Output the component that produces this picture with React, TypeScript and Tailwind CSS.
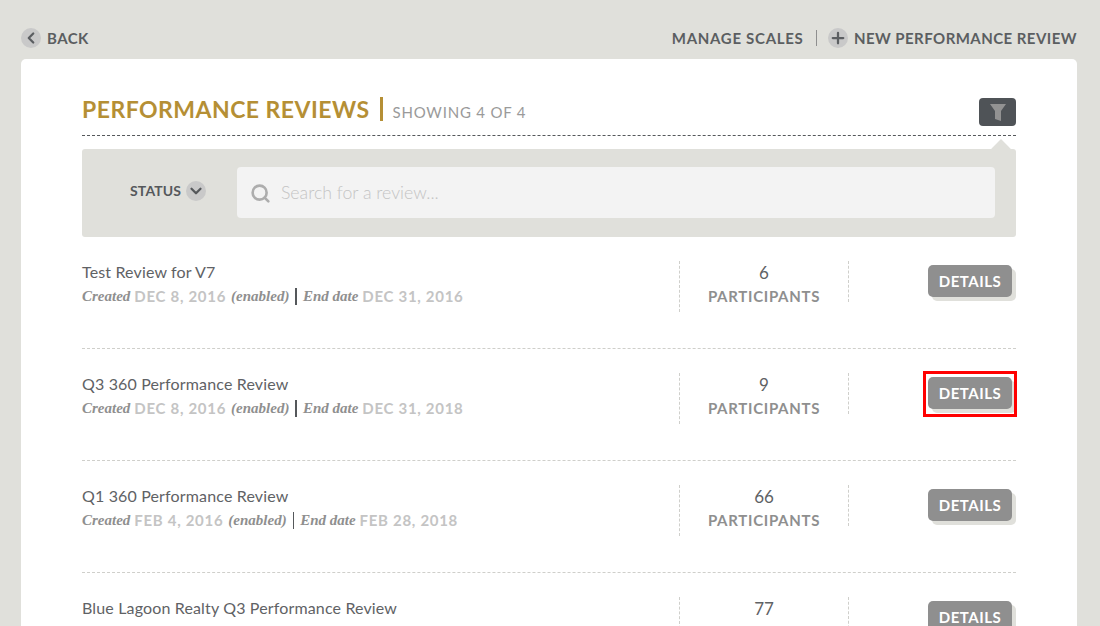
import { ChevronDown, ChevronLeft, Plus, Search } from "lucide-react";

type Review = { name: string; created?: string; end?: string; count: number; marked?: boolean };

const reviews: Review[] = [
    { name: "Test Review for V7", created: "DEC 8, 2016", end: "DEC 31, 2016", count: 6 },
    { name: "Q3 360 Performance Review", created: "DEC 8, 2016", end: "DEC 31, 2018", count: 9, marked: true },
    { name: "Q1 360 Performance Review", created: "FEB 4, 2016", end: "FEB 28, 2018", count: 66 },
    // the dates of this row are below the fold
    { name: "Blue Lagoon Realty Q3 Performance Review", count: 77 },
];

const serif = "font-['Liberation_Serif',serif] italic font-bold text-[15px] text-[#8f8f8f]";
const date = "text-[15px] font-bold tracking-[0.7px] text-[#c4c4c4]";

function ReviewRow({ review }: { review: Review }) {
    return (
        <div className="flex border-b border-dashed border-[#cfcfcb] pt-6 pb-9">
            <div className="-mt-[1px] w-[597px]">
                <p className="text-[16px] leading-6 tracking-[0.15px] text-[#5f6265]">{review.name}</p>
                {review.created && (
                    <p className="flex items-center whitespace-nowrap leading-6">
                        <span className={serif}>Created</span>
                        <span className={`${date} ml-[4px]`}>{review.created}</span>
                        <span className={`${serif} ml-[5px]`}>(enabled)</span>
                        <span className="mx-[6px] h-[17px] w-[1.5px] bg-[#55585b]" />
                        <span className={serif}>End date</span>
                        <span className={`${date} ml-[4px]`}>{review.end}</span>
                    </p>
                )}
            </div>
            <div className="flex h-[51px] w-[169px] flex-col items-center border-l border-dashed border-[#cfcfcb]">
                <span className="h-6 text-[17px] leading-6 text-[#5f6265]">{review.count}</span>
                <span className="-mt-[1px] text-[15px] font-bold leading-6 tracking-[0.7px] text-[#8f8f8f]">PARTICIPANTS</span>
            </div>
            <div className="flex h-[41px] flex-1 justify-end border-l border-dashed border-[#cfcfcb] pt-1 pr-1">
                <div className="relative">
                    <button className="flex h-8 w-[84px] items-center justify-center rounded-[5px] bg-[#8f8f8f] text-[15px] font-bold tracking-[0.5px] text-white shadow-[4px_4px_0_#e0e0db]">
                        DETAILS
                    </button>
                    {review.marked && <div className="absolute -top-[6px] -left-[5px] h-[46px] w-[94px] border-[3px] border-[#ff0000]" />}
                </div>
            </div>
        </div>
    );
}

export default function App() {
    return (
        <div className="flex h-[626px] flex-col overflow-hidden bg-[#e0e0db] pr-[23px] pl-[21px] font-['Lato',sans-serif]">
            <div className="flex h-[59px] shrink-0 items-center justify-between pt-[17px] text-[15px] font-bold tracking-[0.45px] text-[#5b5e61]">
                <div className="flex items-center gap-[6px]">
                    <span className="flex h-5 w-5 items-center justify-center rounded-full bg-[#c9c9c9]">
                        <ChevronLeft size={18} strokeWidth={3} />
                    </span>
                    BACK
                </div>
                <div className="flex items-center">
                    <span className="tracking-[0.7px]">MANAGE SCALES</span>
                    <span className="mr-[11px] ml-[12px] h-4 w-[1.5px] bg-[#8f8f8f]" />
                    <span className="mr-[6px] flex h-5 w-5 items-center justify-center rounded-full bg-[#c9c9c9]">
                        <Plus size={18} strokeWidth={3} />
                    </span>
                    NEW PERFORMANCE REVIEW
                </div>
            </div>
            <div className="flex-1 rounded-t-[5px] bg-white px-[61px]">
                <div className="flex h-[77px] items-end justify-between border-b border-dashed border-[#55585b] pb-[9px]">
                    <div className="flex items-center">
                        <h1 className="text-[23px] font-bold tracking-[0.47px] text-[#b58f35]">PERFORMANCE REVIEWS</h1>
                        <span className="mx-[10px] h-6 w-[3px] bg-[#b58f35]" />
                        <span className="pt-[6px] text-[15px] tracking-[0.8px] text-[#9a9a9a]">SHOWING 4 OF 4</span>
                    </div>
                    <button className="flex h-[28px] w-[37px] items-center justify-center rounded-[4px] bg-[#4f5357]">
                        <svg width="16" height="17" viewBox="0 0 16 17" fill="#929292">
                            <path d="M0 0h16l-5 7v10l-6-2V7z" />
                        </svg>
                    </button>
                </div>
                <div className="relative mt-[13px] flex h-[88px] items-center rounded-[3px] bg-[#e0e0db] pr-[21px] pb-[2px]">
                    <div className="absolute -top-[7px] right-[8px] h-[14px] w-[14px] rotate-45 bg-[#e0e0db]" />
                    <div className="relative flex w-[155px] -translate-y-[1px] items-center justify-end gap-[5px] pr-[31px] text-[14px] font-bold tracking-[0.1px] text-[#55585b]">
                        <span className="-translate-y-[1px]">STATUS</span>
                        <span className="flex h-5 w-5 shrink-0 items-center justify-center rounded-full bg-[#c9c9c9]">
                            <ChevronDown size={18} strokeWidth={3} />
                        </span>
                    </div>
                    <div className="relative flex h-[51px] flex-1 items-center gap-[10px] rounded-[4px] bg-[#f3f3f3] pt-[2px] pl-[13px] text-[17.7px] font-light text-[#c4c4c4]">
                        <Search size={21} strokeWidth={3} className="text-[#adadad]" />
                        Search for a review...
                    </div>
                </div>
                {reviews.map(r => (
                    <ReviewRow key={r.name} review={r} />
                ))}
            </div>
        </div>
    );
}
